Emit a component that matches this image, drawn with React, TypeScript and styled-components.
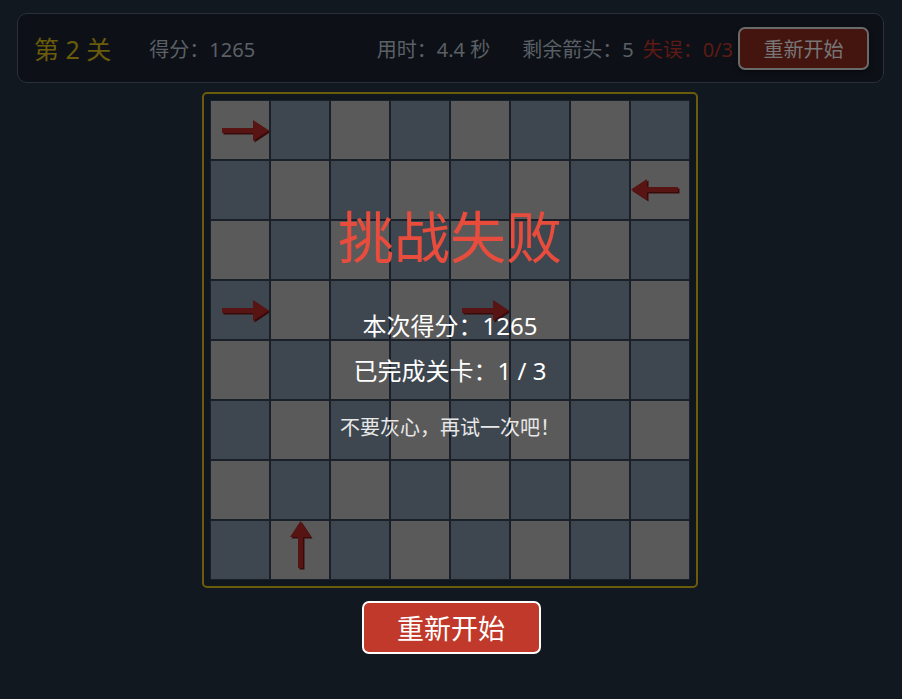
import React from "react";
import styled, { createGlobalStyle } from "styled-components";

const GlobalStyle = createGlobalStyle`
  html, body {
    margin: 0;
    padding: 0;
    background: #111820;
  }
  body {
    font-family: "Noto Sans", "Noto Sans CJK SC", sans-serif;
  }
`;

type Dir = "right" | "left" | "up" | "down";

interface ArrowCell {
  row: number;
  col: number;
  dir: Dir;
}

const arrows: ArrowCell[] = [
  { row: 0, col: 0, dir: "right" },
  { row: 1, col: 7, dir: "left" },
  { row: 3, col: 0, dir: "right" },
  { row: 3, col: 4, dir: "right" },
  { row: 7, col: 1, dir: "up" },
];

const rotation: Record<Dir, number> = {
  right: 0,
  down: 90,
  left: 180,
  up: -90,
};

const Page = styled.div`
  display: flex;
  flex-direction: column;
  align-items: center;
  padding-top: 13px;
`;

const Header = styled.div`
  box-sizing: border-box;
  align-self: stretch;
  margin: 0 18px 0 17px;
  height: 70px;
  display: flex;
  align-items: center;
  padding: 0 14px 0 16px;
  background: #0d1117;
  border: 1px solid #2a3038;
  border-radius: 10px;
`;

const LevelTitle = styled.span`
  font-size: 25px;
  color: #6b5c0c;
  margin-right: 38px;
  white-space: nowrap;
`;

const Stat = styled.span<{ $tone?: "danger" }>`
  font-size: 20px;
  color: ${(p) => (p.$tone === "danger" ? "#5e1a14" : "#5b6066")};
  white-space: nowrap;
`;

const Push = styled.div`
  flex: 1;
`;

const StatGroup = styled.div`
  display: flex;
  align-items: center;
`;

const TopRestart = styled.button`
  box-sizing: border-box;
  width: 131px;
  height: 43px;
  margin-left: 5px;
  background: #44140f;
  border: 2px solid #6a6a6a;
  border-radius: 7px;
  color: #777777;
  font-family: inherit;
  font-size: 20px;
  box-shadow: 0 2px 4px rgba(0, 0, 0, 0.5);
  cursor: pointer;
`;

const BoardWrap = styled.div`
  position: relative;
  margin-top: 9px;
  margin-right: 2px;
  padding: 6px;
  background: #10161d;
  border: 2px solid #6b5c0c;
  border-radius: 5px;
`;

const Grid = styled.div`
  display: grid;
  grid-template-columns: repeat(8, 60px);
  grid-template-rows: repeat(8, 60px);
`;

const Cell = styled.div<{ $light: boolean }>`
  box-sizing: border-box;
  border: 1px solid #1a2029;
  background: ${(p) => (p.$light ? "#5a5a5a" : "#3e4750")};
  display: flex;
`;

const Overlay = styled.div`
  position: absolute;
  inset: 0;
  display: flex;
  flex-direction: column;
  align-items: center;
  padding-top: 105px;
  pointer-events: none;
`;

const FailTitle = styled.div`
  font-size: 56px;
  line-height: 74px;
  color: #e74c3c;
  margin-bottom: 35px;
`;

const ResultLine = styled.div`
  font-size: 24px;
  line-height: 36px;
  color: #ffffff;
  margin-bottom: 9px;
`;

const Hint = styled.div`
  font-size: 20px;
  line-height: 28px;
  color: #e8e8e8;
  margin-top: 16px;
`;

const BigRestart = styled.button`
  box-sizing: border-box;
  margin-top: 13px;
  width: 179px;
  height: 53px;
  background: #c0392b;
  border: 2px solid #ffffff;
  border-radius: 7px;
  color: #ffffff;
  font-family: inherit;
  font-size: 27px;
  cursor: pointer;
`;

const Arrow: React.FC<{ dir: Dir }> = ({ dir }) => {
  const r = rotation[dir];
  const shape = (fill: string) => (
    <g transform={`rotate(${r} 29 29)`} fill={fill}>
      <rect x="11" y="27" width="32" height="5" />
      <polygon points="42,19 58,29.5 42,40" />
    </g>
  );
  return (
    <svg width="58" height="58" viewBox="0 0 58 58">
      <g transform="translate(1.5 1.5)">{shape("#380a09")}</g>
      {shape("#581412")}
    </svg>
  );
};

export default function App() {
  const cells = [];
  for (let row = 0; row < 8; row++) {
    for (let col = 0; col < 8; col++) {
      const a = arrows.find((x) => x.row === row && x.col === col);
      cells.push(
        <Cell key={`${row}-${col}`} $light={(row + col) % 2 === 0}>
          {a && <Arrow dir={a.dir} />}
        </Cell>
      );
    }
  }

  return (
    <>
      <GlobalStyle />
      <Page>
        <Header>
          <LevelTitle>第 2 关</LevelTitle>
          <Stat>得分：1265</Stat>
          <Push />
          <StatGroup>
            <Stat style={{ marginRight: 32 }}>用时：4.4 秒</Stat>
            <Stat style={{ marginRight: 9 }}>剩余箭头：5</Stat>
            <Stat $tone="danger">失误：0/3</Stat>
            <TopRestart>重新开始</TopRestart>
          </StatGroup>
        </Header>

        <BoardWrap>
          <Grid>{cells}</Grid>
          <Overlay>
            <FailTitle>挑战失败</FailTitle>
            <ResultLine>本次得分：1265</ResultLine>
            <ResultLine>已完成关卡：1 / 3</ResultLine>
            <Hint>不要灰心，再试一次吧！</Hint>
          </Overlay>
        </BoardWrap>

        <BigRestart>重新开始</BigRestart>
      </Page>
    </>
  );
}
